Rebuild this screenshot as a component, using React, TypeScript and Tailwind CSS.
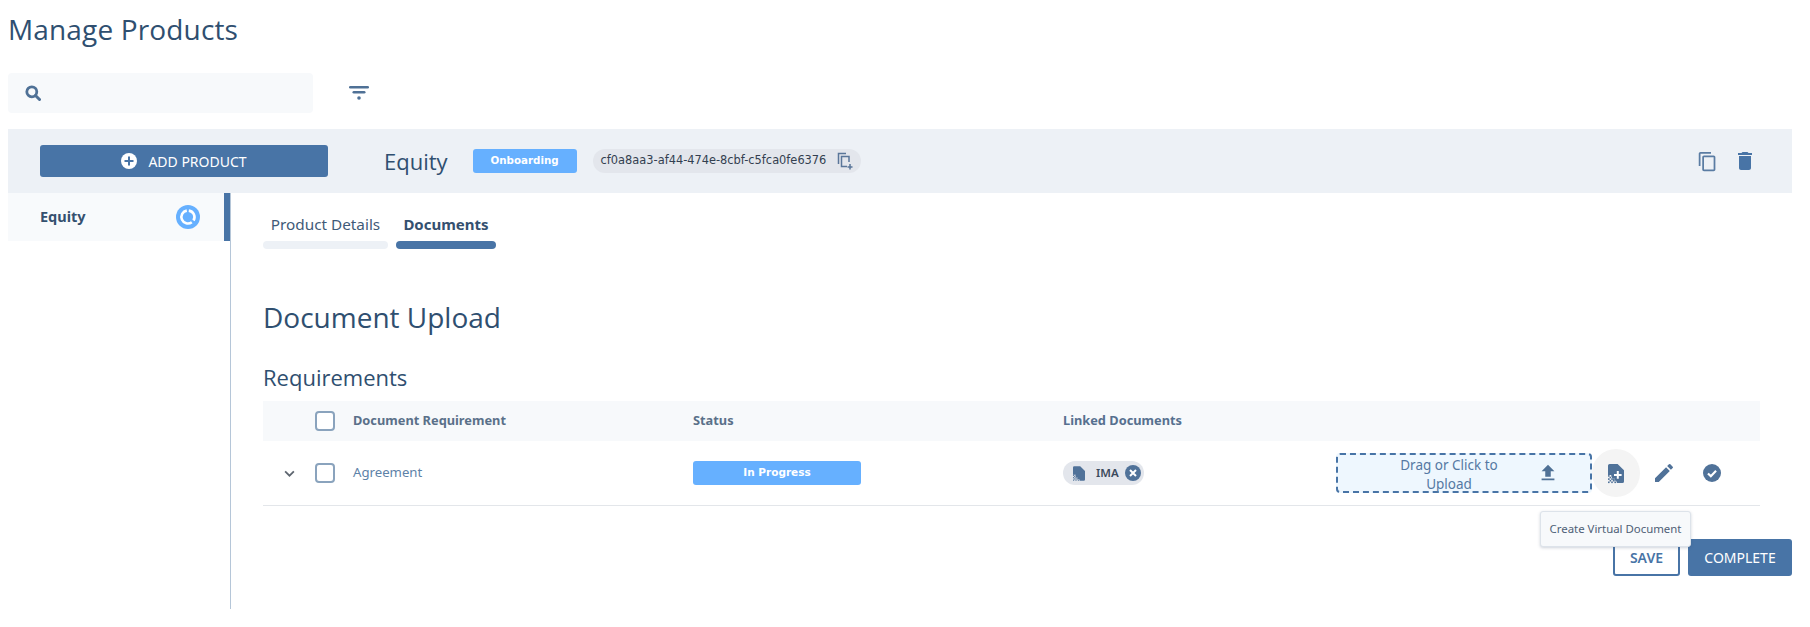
import React from "react"

const body = { fontFamily: '"Noto Sans", sans-serif' }

function Icon({ d, className }: { d: string; className: string }) {
  return (
    <svg viewBox="0 0 24 24" className={className} fill="currentColor">
      <path d={d} />
    </svg>
  )
}

// file glyph with the dithered bottom-left corner
function DocIcon({ className, plus }: { className: string; plus?: boolean }) {
  const dots = [
    [0, 14], [4, 14], [2, 16], [0, 18], [4, 18], [6, 18], [2, 20], [6, 20], [0, 22], [4, 22], [8, 22], [10, 20],
  ]
  return (
    <svg viewBox="0 0 20 24" className={className} fill="currentColor">
      <path d="M2 0h10l8 8v14a2 2 0 0 1-2 2H11v-3H8v-3H5v-4H0V2a2 2 0 0 1 2-2z" />
      {dots.map(([x, y]) => (
        <rect key={`${x}-${y}`} x={x} y={y} width="2" height="2" />
      ))}
      {plus && <path fill="#fff" d="M11 9h2.500v3.500H17V15h-3.500v3.500H11V15H7.500v-2.500H11z" />}
    </svg>
  )
}

function Checkbox() {
  return <div className="w-[20px] h-[20px] rounded-[4px] border-2 border-[#8aa3bd] bg-white shrink-0" />
}

export default function App() {
  return (
    <div className="w-[1810px] h-[627px] bg-white text-[#2e4a68] overflow-hidden pl-[8px] pr-[18px]" style={body}>
      <h1 className="h-[73px] pt-[9px] text-[28px] leading-[40px] text-[#2f4f70] font-['Open_Sans'] tracking-[0.15px]">
        Manage Products
      </h1>

      <div className="flex items-center h-[40px]">
        <div className="w-[305px] h-[40px] bg-[#f7f9fb] rounded-[4px] flex items-center pl-[17px]">
          <svg viewBox="0 0 16 16" className="w-[16px] h-[16px] text-[#4f7196]" fill="none" stroke="currentColor">
            <circle cx="6.800" cy="6.800" r="5" strokeWidth="2.800" />
            <path d="M10.500 10.500 14.500 14.500" strokeWidth="3" strokeLinecap="round" />
          </svg>
        </div>
        <svg viewBox="0 0 20 14" className="w-[20px] h-[14px] ml-[36px] text-[#4f7196]" fill="currentColor">
          <rect x="0" y="0" width="20" height="2.600" rx="1.300" />
          <rect x="3.500" y="5" width="13" height="2.600" rx="1.300" />
          <circle cx="10" cy="12" r="1.800" />
        </svg>
      </div>

      <div className="mt-[16px] h-[64px] bg-[#edf1f6] flex items-center pl-[32px] pr-[35px]">
        <button className="w-[288px] h-[32px] bg-[#4874a6] rounded-[3px] text-white flex items-center justify-center gap-[11px] text-[14px]">
          <svg viewBox="0 0 16 16" className="w-[16px] h-[16px]">
            <circle cx="8" cy="8" r="8" fill="#fff" />
            <path d="M7 3.500h2V7h3.500v2H9v3.500H7V9H3.500V7H7z" fill="#4874a6" />
          </svg>
          ADD PRODUCT
        </button>
        <span className="ml-[56px] text-[22px] text-[#2f4f70] font-['Open_Sans']">Equity</span>
        <span className="ml-[25px] w-[104px] h-[24px] bg-[#66b0ff] rounded-[3px] text-white text-[10.300px] font-bold font-['DejaVu_Sans'] flex items-center justify-center">
          Onboarding
        </span>
        <div className="ml-[16px] w-[268px] h-[24px] bg-[#e3e6ec] rounded-full flex items-center pl-[8px]">
          <span className="text-[11.400px] text-[#333f50] font-['DejaVu_Sans'] whitespace-nowrap">
            cf0a8aa3-af44-474e-8cbf-c5fca0fe6376
          </span>
          <svg viewBox="0 0 16 18" className="ml-[11px] w-[16px] h-[18px] text-[#5a7699]" fill="none" stroke="currentColor" strokeWidth="1.500">
            <path d="M1.500 12V1.500h7.500" />
            <path d="M10 14.500H4.500V4.500h7.500V10" />
            <path d="M13 12v5.500M10.500 15H15.500" />
          </svg>
        </div>
        <div className="ml-auto flex items-center gap-[15px]">
          <Icon
            d="M16 1H4c-1.100 0-2 .9-2 2v14h2V3h12V1zm3 4H8c-1.100 0-2 .9-2 2v14c0 1.100.9 2 2 2h11c1.100 0 2-.9 2-2V7c0-1.100-.9-2-2-2zm0 16H8V7h11v14z"
            className="w-[21px] h-[21px] text-[#5a7ca3]"
          />
          <Icon
            d="M6 19c0 1.100.9 2 2 2h8c1.100 0 2-.9 2-2V7H6v12zM19 4h-3.500l-1-1h-5l-1 1H5v2h14V4z"
            className="w-[24px] h-[24px] text-[#4874a6]"
          />
        </div>
      </div>

      <div className="flex">
        <aside className="w-[223px] h-[416px] border-r border-[#b5c6d8] shrink-0">
          <div className="h-[48px] bg-[#f8fafc] border-r-[6px] border-[#4874a6] flex items-center justify-between pl-[32px] pr-[24px]">
            <span className="text-[14.500px] font-bold text-[#34506f]">Equity</span>
            <svg viewBox="0 0 24 24" className="w-[24px] h-[24px]">
              <circle cx="12" cy="12" r="12" fill="#66b0ff" />
              <path d="M12.800 5.600A6.500 6.500 0 0 1 17.500 15.500" fill="none" stroke="#fff" strokeWidth="2.600" />
              <path d="M15.800 17.200A6.500 6.500 0 1 1 10.800 5.600" fill="none" stroke="#fff" strokeWidth="2.600" />
            </svg>
          </div>
        </aside>

        <main className="flex-1 pl-[32px] relative">
          <div className="flex gap-[8px] h-[56px]">
            <div className="w-[125px] flex flex-col items-center justify-end">
              <span className="text-[15.300px] leading-[20px] text-[#3f5a78] whitespace-nowrap">Product Details</span>
              <div className="w-full h-[8px] mt-[7px] bg-[#edf1f6] rounded-full" />
            </div>
            <div className="w-[100px] flex flex-col items-center justify-end">
              <span className="text-[15px] leading-[20px] font-bold text-[#34506f]">Documents</span>
              <div className="w-full h-[8px] mt-[7px] bg-[#4874a6] rounded-full" />
            </div>
          </div>

          <h2 className="mt-[48px] text-[28px] leading-[40px] text-[#2f4f70] font-['Open_Sans']">Document Upload</h2>
          <h3 className="mt-[26px] text-[22px] leading-[28px] text-[#2f4f70] font-['Open_Sans']">Requirements</h3>

          <div className="mt-[10px] mr-[32px]">
            <div className="h-[40px] bg-[#f7f9fb] flex items-center text-[12.800px] font-bold text-[#5a7089]">
              <div className="w-[52px]" />
              <Checkbox />
              <span className="ml-[18px] w-[340px]">Document Requirement</span>
              <span className="w-[370px]">Status</span>
              <span className="text-[#56708f]">Linked Documents</span>
            </div>
            <div className="h-[65px] border-b border-[#e3e6ea] flex items-center">
              <div className="w-[52px] flex justify-center">
                <svg viewBox="0 0 12 8" className="w-[11px] h-[7px] text-[#5e6670]" fill="none" stroke="currentColor" strokeWidth="2">
                  <path d="M1 1.500 6 6.500 11 1.500" />
                </svg>
              </div>
              <Checkbox />
              <span className="ml-[18px] w-[340px] text-[13.200px] text-[#5d82a8]">Agreement</span>
              <div className="w-[370px]">
                <div className="w-[168px] h-[24px] bg-[#66b0ff] rounded-[3px] text-white text-[10.500px] font-bold font-['DejaVu_Sans'] flex items-center justify-center">
                  In Progress
                </div>
              </div>
              <div className="w-[81px] h-[24px] bg-[#e3e6ec] rounded-full flex items-center pl-[10px] shrink-0">
                <DocIcon className="w-[12px] h-[15px] text-[#507299]" />
                <span className="text-[11.500px] font-semibold text-[#3b4a5c] ml-[11px]">IMA</span>
                <svg viewBox="0 0 16 16" className="w-[16px] h-[16px] ml-[6px]">
                  <circle cx="8" cy="8" r="8" fill="#507299" />
                  <path d="M5 5l6 6M11 5l-6 6" stroke="#fff" strokeWidth="2" />
                </svg>
              </div>
              <div className="ml-[192px] w-[256px] h-[40px] bg-[#eef7fe] border-2 border-dashed border-[#4874a6] rounded-[4px] flex items-center shrink-0">
                <span className="ml-[46px] mt-[3px] w-[130px] text-center text-[13.500px] leading-[19px] text-[#5579a3]">
                  Drag or Click to Upload
                </span>
                <Icon d="M9 16h6v-6h4l-7-7-7 7h4zm-4 2h14v2H5z" className="ml-[23px] w-[22px] h-[22px] text-[#4f7196]" />
              </div>
              <div className="w-[48px] h-[48px] rounded-full bg-[#f4f4f4] flex items-center justify-center shrink-0">
                <DocIcon plus className="w-[16px] h-[21px] text-[#507299]" />
              </div>
              <Icon
                d="M3 17.250V21h3.750L17.810 9.940l-3.750-3.750L3 17.250zM20.710 7.040a1 1 0 0 0 0-1.410l-2.340-2.340a1 1 0 0 0-1.410 0l-1.830 1.830 3.750 3.750 1.830-1.830z"
                className="ml-[12px] w-[24px] h-[24px] text-[#507299]"
              />
              <svg viewBox="0 0 20 20" className="ml-[27px] w-[18px] h-[18px]">
                <circle cx="10" cy="10" r="10" fill="#507299" />
                <path d="M5.500 10.500 8.700 13.500 14.500 7.500" fill="none" stroke="#fff" strokeWidth="2.400" />
              </svg>
            </div>
          </div>

          <div className="mt-[33px] flex justify-end gap-[8px]">
            <button className="w-[67px] h-[37px] border-2 border-[#4874a6] rounded-[3px] bg-white text-[14px] font-semibold text-[#4874a6]">
              SAVE
            </button>
            <button className="w-[104px] h-[37px] bg-[#4874a6] rounded-[3px] text-[14px] text-white">
              COMPLETE
            </button>
          </div>

          <div className="absolute left-[1309px] top-[318px] w-[151px] h-[36px] bg-[#f7f9fb] border border-[#dde3ea] rounded-[3px] shadow-[0_1px_3px_rgba(60,80,110,0.25)] flex items-center justify-center text-[11.400px] text-[#4e6076] whitespace-nowrap">
            Create Virtual Document
          </div>
        </main>
      </div>
    </div>
  )
}
